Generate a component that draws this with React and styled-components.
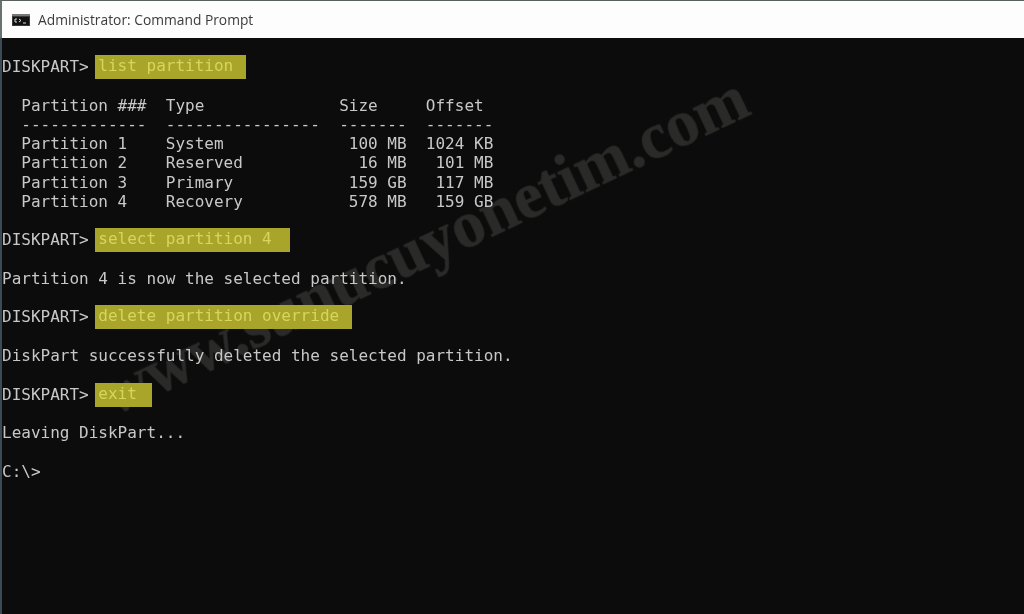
import React from "react";
import styled, { createGlobalStyle } from "styled-components";

const Global = createGlobalStyle`
  html, body { margin: 0; padding: 0; background: #0c0c0c; }
  #root { width: 1024px; height: 614px; overflow: hidden; }
`;

const Window = styled.div`
  position: relative;
  width: 1024px;
  height: 614px;
  display: flex;
  flex-direction: column;
  background: #0c0c0c;
  overflow: hidden;
`;

const TitleBar = styled.header`
  height: 38px;
  flex: none;
  box-sizing: border-box;
  border-top: 1px solid #5a5f60;
  border-left: 2px solid #6a6f70;
  background: #fdfdfd;
  display: flex;
  align-items: center;
  gap: 8px;
  padding-left: 10px;
  filter: blur(0.3px);
`;

const Title = styled.span`
  font-family: "Open Sans", "Noto Sans", sans-serif;
  font-size: 13.8px;
  color: #3c3c3c;
`;

const Console = styled.pre`
  position: relative;
  z-index: 1;
  flex: 1;
  margin: 0;
  box-sizing: border-box;
  border-left: 2px solid #3b4a55;
  padding-top: 19px;
  font-family: "DejaVu Sans Mono", "Liberation Mono", monospace;
  font-size: 16px;
  line-height: 19.27px;
  color: #c8c8c8;
  filter: blur(0.5px);
`;

const Highlight = styled.span`
  display: inline-block;
  box-sizing: border-box;
  width: ${(p) => p.$width}px;
  height: 24px;
  margin: -2px 0 -3px -3px;
  padding-left: 3px;
  line-height: 22px;
  vertical-align: top;
  background: #a9a52b;
  color: #d6d65f;
`;

const Watermark = styled.div`
  position: absolute;
  z-index: 0;
  left: 104px;
  top: 364px;
  font-family: "Liberation Serif", serif;
  font-weight: 700;
  font-size: 65px;
  line-height: 1;
  white-space: nowrap;
  color: #2a2a29;
  -webkit-text-stroke: 0.6px #2a2a29;
  transform: rotate(-25.3deg);
  transform-origin: left center;
  filter: blur(0.7px);
  pointer-events: none;
`;

const CmdIcon = () => (
  <svg width="18" height="12" viewBox="0 0 18 12" aria-hidden="true">
    <rect width="18" height="12" fill="#3a3a3a" />
    <rect y="0" width="18" height="2" fill="#777" />
    <rect x="1" y="3" width="16" height="8" fill="#111" />
    <path d="M3 5h2M3 5v3M3 8h2M7 5l2 1.5-2 1.5M11 9h3" stroke="#ddd" strokeWidth="1" fill="none" />
  </svg>
);

export default function App() {
  return (
    <Window>
      <Global />
      <TitleBar>
        <CmdIcon />
        <Title>Administrator: Command Prompt</Title>
      </TitleBar>
      <Watermark>www.sunucuyonetim.com</Watermark>
      <Console>
        {"DISKPART> "}<Highlight $width={151}>list partition</Highlight>{"\n"}
        {"\n"}
        {"  Partition ###  Type              Size     Offset\n"}
        {"  -------------  ----------------  -------  -------\n"}
        {"  Partition 1    System             100 MB  1024 KB\n"}
        {"  Partition 2    Reserved            16 MB   101 MB\n"}
        {"  Partition 3    Primary            159 GB   117 MB\n"}
        {"  Partition 4    Recovery           578 MB   159 GB\n"}
        {"\n"}
        {"DISKPART> "}<Highlight $width={195}>select partition 4</Highlight>{"\n"}
        {"\n"}
        {"Partition 4 is now the selected partition.\n"}
        {"\n"}
        {"DISKPART> "}<Highlight $width={257}>delete partition override</Highlight>{"\n"}
        {"\n"}
        {"DiskPart successfully deleted the selected partition.\n"}
        {"\n"}
        {"DISKPART> "}<Highlight $width={57}>exit</Highlight>{"\n"}
        {"\n"}
        {"Leaving DiskPart...\n"}
        {"\n"}
        {"C:\\>"}
      </Console>
    </Window>
  );
}
